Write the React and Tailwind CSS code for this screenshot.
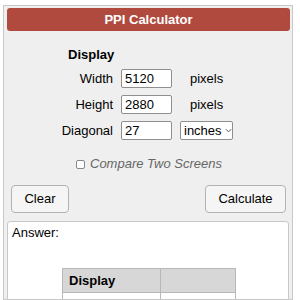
import { useState } from 'react';

// Small field row: right-aligned label, input, and a trailing unit or select
function FieldRow({ label, value, onChange, children }) {
  return (
    <div className="flex items-center h-[19px]">
      <div className="w-[110px] pr-[4px] text-right">{label}</div>
      <input
        value={value}
        onChange={(e) => onChange(e.target.value)}
        className="ml-[4px] w-[51px] h-[19px] border border-[#8f8f8f] rounded-[2px] bg-white px-[3px] text-[13px] text-black outline-none"
      />
      {children}
    </div>
  );
}

export default function App() {
  const [width, setWidth] = useState('5120');
  const [height, setHeight] = useState('2880');
  const [diagonal, setDiagonal] = useState('27');
  const [compare, setCompare] = useState(false);

  return (
    <div
      className="min-h-[300px] bg-white text-[13px] text-black leading-[16px]"
      style={{ fontFamily: '"Liberation Sans", Arial, sans-serif' }}
    >
      <div className="ml-[3px] mt-[5px] w-[290px] h-[295px] overflow-hidden border border-[#c8c8c8] bg-[#efefef] pt-[2px] pl-[3px] pr-[2px]">
        <div className="h-[23px] w-[283px] rounded-[3px] bg-[#b04a3e] text-center text-white font-bold leading-[23px]">
          PPI Calculator
        </div>

        <div className="mt-[16px] pl-[61px] font-bold">Display</div>

        <div className="mt-[6px] flex flex-col gap-[7px]">
          <FieldRow label="Width" value={width} onChange={setWidth}>
            <span className="ml-[18px]">pixels</span>
          </FieldRow>
          <FieldRow label="Height" value={height} onChange={setHeight}>
            <span className="ml-[18px]">pixels</span>
          </FieldRow>
          <FieldRow label="Diagonal" value={diagonal} onChange={setDiagonal}>
            <div className="ml-[8px] flex h-[19px] w-[53px] items-center border border-[#8f8f8f] rounded-[2px] bg-white pl-[3px]">
              <span>inches</span>
              <svg className="ml-[3px] w-[7px] h-[7px]" viewBox="0 0 8 8" fill="none" stroke="#444" strokeWidth="1">
                <path d="M1 2.5l3 3 3-3" />
              </svg>
            </div>
          </FieldRow>
        </div>

        <label className="mt-[16px] flex items-center pl-[69px] text-[#666] italic">
          <input
            type="checkbox"
            checked={compare}
            onChange={(e) => setCompare(e.target.checked)}
            className="appearance-none w-[9px] h-[9px] border border-[#888] rounded-[2px] bg-white"
          />
          <span className="ml-[5px]">Compare Two Screens</span>
        </label>

        <div className="mt-[13px] flex justify-between px-[4px]">
          <button className="h-[28px] w-[58px] border border-[#b3b3b3] rounded-[4px] bg-[#f5f5f5]">
            Clear
          </button>
          <button className="h-[28px] w-[81px] border border-[#b3b3b3] rounded-[4px] bg-[#f5f5f5]">
            Calculate
          </button>
        </div>

        <div className="mt-[8px] w-[282px] h-[100px] border border-[#c8c8c8] rounded-[3px] bg-white pl-[4px] pt-[3px]">
          <div>Answer:</div>
          <table className="mt-[27px] ml-[50px] border-collapse">
            <tbody>
              <tr className="bg-[#d7d7d7] h-[24px]">
                <td className="w-[98px] border border-[#b8b8b8] px-[6px] font-bold">Display</td>
                <td className="w-[75px] border border-[#b8b8b8]"></td>
              </tr>
              <tr className="h-[24px]">
                <td className="border border-[#b8b8b8] px-[6px]">PPI</td>
                <td className="border border-[#b8b8b8] px-[6px] text-right">217.57</td>
              </tr>
            </tbody>
          </table>
        </div>
      </div>
    </div>
  );
}
